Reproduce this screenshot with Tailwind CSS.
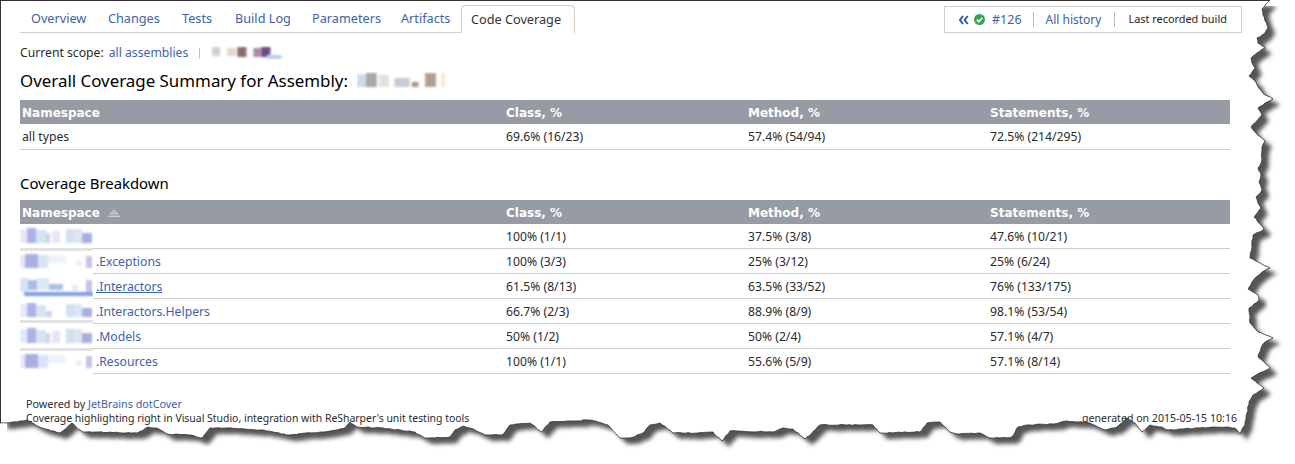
<!DOCTYPE html>
<html>
<head>
<meta charset="UTF-8">
<title>Code Coverage</title>
<script src="https://cdn.jsdelivr.net/npm/@tailwindcss/browser@4"></script>
</head>
<body class="bg-white">
<div class="relative w-[1295px] h-[464px] overflow-hidden bg-white text-[#2a2a2a] font-['Noto_Sans','Liberation_Sans',sans-serif] text-[12.2px]">

  <!-- mosaic patches -->
  <svg width="0" height="0" class="absolute">
    <defs>
      <filter id="soft"><feGaussianBlur stdDeviation="1"/></filter>
      <symbol id="mosA" viewBox="0 0 73 27">
        <rect y="2" width="73" height="25" fill="#fff"/>
        <g filter="url(#soft)">
          <rect x="0" y="5" width="8" height="14" fill="#e3ebf8"/><rect x="7" y="4" width="9" height="15" fill="#b0b0e6"/><rect x="16" y="6" width="10" height="13" fill="#d5e3f0"/><rect x="26" y="9" width="4" height="10" fill="#c9d6ec"/>
          <rect x="32" y="7" width="8" height="12" fill="#e8e4f6"/><rect x="46" y="5" width="8" height="14" fill="#d4dff0"/><rect x="54" y="5" width="8" height="14" fill="#dce6f4"/><rect x="62" y="9" width="10" height="10" fill="#a8aedc"/>
        </g>
        <rect x="0" y="24" width="73" height="3" fill="#e2e2e2"/>
      </symbol>
      <symbol id="mosD" viewBox="0 0 73 27">
        <rect y="2" width="73" height="25" fill="#fff"/>
        <g filter="url(#soft)">
          <rect x="0" y="5" width="8" height="13" fill="#e3ebf8"/><rect x="7" y="4" width="9" height="14" fill="#b0b0e6"/><rect x="16" y="6" width="10" height="12" fill="#d5e3f0"/><rect x="26" y="12" width="6" height="6" fill="#c9d6ec"/>
          <rect x="46" y="5" width="8" height="13" fill="#d4dff0"/><rect x="54" y="5" width="8" height="13" fill="#dce6f4"/><rect x="62" y="9" width="10" height="9" fill="#a8aedc"/>
        </g>
        <rect x="0" y="21" width="73" height="3" fill="#e2e2e2"/>
      </symbol>
      <symbol id="mosB" viewBox="0 0 73 27">
        <rect y="2" width="73" height="25" fill="#fff"/>
        <g filter="url(#soft)">
          <rect x="0" y="6" width="7" height="13" fill="#e8e8f6"/><rect x="5" y="5" width="13" height="14" fill="#aaaee2"/><rect x="18" y="6" width="10" height="13" fill="#dce2f6"/><rect x="28" y="6" width="18" height="8" fill="#eef2fb"/>
          <rect x="56" y="11" width="6" height="6" fill="#ecf1f8"/><rect x="66" y="7" width="6" height="12" fill="#c8c0e8"/>
        </g>
      </symbol>
      <symbol id="mosC" viewBox="0 0 73 27">
        <rect y="2" width="73" height="25" fill="#fff"/>
        <g filter="url(#soft)">
          <rect x="0" y="4" width="9" height="14" fill="#d8e2f4"/><rect x="8" y="6" width="9" height="10" fill="#a8bce6"/><rect x="17" y="4" width="12" height="12" fill="#dfe8f6"/><rect x="29" y="10" width="14" height="6" fill="#aac0e6"/>
          <rect x="52" y="11" width="6" height="6" fill="#e2eaf6"/><rect x="66" y="6" width="6" height="12" fill="#c8c0e8"/>
          <rect x="4" y="18" width="69" height="4" fill="#7f9fdc"/>
        </g>
      </symbol>
    </defs>
  </svg>

  <div class="border-t border-l border-[#333] h-full pl-[19px] pr-[53px]">
    <!-- tabs -->
    <div class="flex justify-between pt-1 w-[1222px] h-[28px] box-content">
      <div class="flex items-end w-[555px] h-[28px] border-b border-[#d0d0d0] text-[12.7px] text-[#3d62a8] whitespace-nowrap">
        <a class="w-[77px] pl-[11px] h-[27px] leading-[27px]">Overview</a>
        <a class="w-[74px] pl-[11px] h-[27px] leading-[27px]">Changes</a>
        <a class="w-[53px] pl-[11px] h-[27px] leading-[27px]">Tests</a>
        <a class="w-[77px] pl-[11px] h-[27px] leading-[27px]">Build Log</a>
        <a class="w-[89px] pl-[11px] h-[27px] leading-[27px]">Parameters</a>
        <a class="w-[71px] pl-[11px] h-[27px] leading-[27px]">Artifacts</a>
        <a class="w-[114px] pl-[9px] h-[28px] leading-[27px] -mb-px bg-white border border-b-0 border-[#d0d0d0] rounded-t text-[#333]">Code Coverage</a>
      </div>
      <div class="flex items-center w-[298px] h-[27px] mt-px border border-[#d0d0d0] text-[#3d62a8] whitespace-nowrap">
        <svg class="ml-[13px]" width="11" height="10" viewBox="0 0 11 10"><path d="M5 1 2 5l3 4M9.7 1 6.7 5l3 4" fill="none" stroke="#2f5da8" stroke-width="2"/></svg>
        <svg class="ml-[5px]" width="11" height="11" viewBox="0 0 12 12"><circle cx="6" cy="6" r="6" fill="#2fa84f"/><path d="M3 6.2 5.2 8.4 9 4.2" fill="none" stroke="#fff" stroke-width="1.8"/></svg>
        <span class="ml-[7px] pt-px text-[12.5px]">#126</span>
        <span class="ml-[11px] w-px h-[15px] bg-[#bbb]"></span>
        <span class="ml-[12px] text-[12px]">All history</span>
        <span class="ml-[13px] w-px h-[15px] bg-[#bbb]"></span>
        <span class="ml-[13px] text-[10.9px] text-[#222]">Last recorded build</span>
      </div>
    </div>

    <!-- scope -->
    <div class="flex items-center h-[16px] mt-[12px]">
      <span>Current scope:</span>
      <a class="ml-[5px] text-[#3d62a8]">all assemblies</a>
      <span class="ml-[11px] w-px h-[11px] bg-[#b8c4dc]"></span>
      <svg class="ml-[11px]" width="72" height="14" viewBox="0 0 63 14" preserveAspectRatio="none"><g filter="url(#soft)"><rect x="1" y="1" width="7" height="9" fill="#cfcfd6"/><rect x="14" y="2" width="8" height="8" fill="#e8d8cc"/><rect x="23" y="1" width="8" height="10" fill="#8a6a70"/><rect x="37" y="2" width="7" height="9" fill="#a88ea8"/><rect x="44" y="1" width="8" height="10" fill="#6a4a80"/><rect x="49" y="9" width="13" height="4" fill="#b8d0e4"/></g></svg>
    </div>

    <!-- summary -->
    <div class="flex items-center h-[24px] mt-[8px] text-[16.9px] text-black whitespace-nowrap">
      <span>Overall Coverage Summary for Assembly:</span>
      <svg class="ml-[9px]" width="90" height="18" viewBox="0 0 82 18" preserveAspectRatio="none"><g filter="url(#soft)"><rect x="0" y="2" width="8" height="13" fill="#d0dbe8"/><rect x="8" y="1" width="10" height="14" fill="#a8a8ac"/><rect x="20" y="3" width="9" height="12" fill="#e4e0dc"/><rect x="34" y="6" width="14" height="9" fill="#c8ccd4"/><rect x="50" y="10" width="6" height="5" fill="#a89888"/><rect x="62" y="1" width="10" height="14" fill="#b0a090"/><rect x="77" y="1" width="3" height="14" fill="#f6e8d0"/></g></svg>
    </div>
    <table class="table-fixed w-[1210px] mt-[7px] border-collapse [&_td]:pt-[2px] [&_th]:pt-[2px]">
      <colgroup><col class="w-[484px]"><col class="w-[242px]"><col class="w-[242px]"><col class="w-[242px]"></colgroup>
      <tr class="h-[24px] bg-[#979ba3] text-white text-left font-['DejaVu_Sans',sans-serif] text-[12px]">
        <th class="pl-[2px] font-bold">Namespace</th><th class="pl-[2px] font-bold">Class, %</th><th class="pl-[2px] font-bold">Method, %</th><th class="pl-[2px] font-bold">Statements, %</th>
      </tr>
      <tr class="h-[25px] border-b border-[#ccc]">
        <td class="pl-[2px]">all types</td><td class="pl-[2px]">69.6% (16/23)</td><td class="pl-[2px]">57.4% (54/94)</td><td class="pl-[2px]">72.5% (214/295)</td>
      </tr>
    </table>

    <!-- breakdown -->
    <div class="flex items-center h-[20px] mt-[24px] text-[14.9px] text-black">Coverage Breakdown</div>
    <table class="table-fixed w-[1210px] mt-[6px] border-collapse [&_td]:pt-[2px] [&_th]:pt-[2px]">
      <colgroup><col class="w-[484px]"><col class="w-[242px]"><col class="w-[242px]"><col class="w-[242px]"></colgroup>
      <tr class="h-[24px] bg-[#979ba3] text-white text-left font-['DejaVu_Sans',sans-serif] text-[12px]">
        <th class="pl-[2px] font-bold">
          <span class="inline-flex items-center gap-[8px]">Namespace
            <svg width="12" height="8" viewBox="0 0 13 8"><path d="M6.5 0.5 11 5H2z" fill="#b4b7bd" stroke="#e8e8e8" stroke-width="0.6"/><path d="M0.5 7.5H12.5" stroke="#f0f0f0"/></svg>
          </span>
        </th>
        <th class="pl-[2px] font-bold">Class, %</th><th class="pl-[2px] font-bold">Method, %</th><th class="pl-[2px] font-bold">Statements, %</th>
      </tr>
      <tr class="h-[25px] border-b border-[#ccc]">
        <td class="relative"><svg class="absolute left-0 top-0" width="73" height="27"><use href="#mosA"/></svg></td>
        <td class="pl-[2px]">100% (1/1)</td><td class="pl-[2px]">37.5% (3/8)</td><td class="pl-[2px]">47.6% (10/21)</td>
      </tr>
      <tr class="h-[25px] border-b border-[#ccc]">
        <td class="relative pl-[76px] text-[#3d62a8]"><svg class="absolute left-0 top-0" width="73" height="27"><use href="#mosB"/></svg>.Exceptions</td>
        <td class="pl-[2px]">100% (3/3)</td><td class="pl-[2px]">25% (3/12)</td><td class="pl-[2px]">25% (6/24)</td>
      </tr>
      <tr class="h-[25px] border-b border-[#ccc]">
        <td class="relative pl-[76px] text-[#3d62a8]"><svg class="absolute left-0 top-0" width="73" height="27"><use href="#mosC"/></svg><span class="underline">.Interactors</span></td>
        <td class="pl-[2px]">61.5% (8/13)</td><td class="pl-[2px]">63.5% (33/52)</td><td class="pl-[2px]">76% (133/175)</td>
      </tr>
      <tr class="h-[25px] border-b border-[#ccc]">
        <td class="relative pl-[76px] text-[#3d62a8]"><svg class="absolute left-0 top-0" width="73" height="27"><use href="#mosD"/></svg>.Interactors.Helpers</td>
        <td class="pl-[2px]">66.7% (2/3)</td><td class="pl-[2px]">88.9% (8/9)</td><td class="pl-[2px]">98.1% (53/54)</td>
      </tr>
      <tr class="h-[25px] border-b border-[#ccc]">
        <td class="relative pl-[76px] text-[#3d62a8]"><svg class="absolute left-0 top-0" width="73" height="27"><use href="#mosA"/></svg>.Models</td>
        <td class="pl-[2px]">50% (1/2)</td><td class="pl-[2px]">50% (2/4)</td><td class="pl-[2px]">57.1% (4/7)</td>
      </tr>
      <tr class="h-[25px] border-b border-[#ccc]">
        <td class="relative pl-[76px] text-[#3d62a8]"><svg class="absolute left-0 top-0" width="73" height="27"><use href="#mosB"/></svg>.Resources</td>
        <td class="pl-[2px]">100% (1/1)</td><td class="pl-[2px]">55.6% (5/9)</td><td class="pl-[2px]">57.1% (8/14)</td>
      </tr>
    </table>

    <!-- footer -->
    <div class="w-[1211px] ml-[6px] mt-[22px] text-[10.8px]">
      <div class="leading-[15px]">Powered by <a class="text-[#3d62a8]">JetBrains dotCover</a></div>
      <div class="flex justify-between leading-[15px]">
        <span class="text-[10.45px]">Coverage highlighting right in Visual Studio, integration with ReSharper's unit testing tools</span>
        <span class="text-[10.6px]">generated on 2015-05-15 10:16</span>
      </div>
    </div>
  </div>

  <!-- torn page edge, lies over the content -->
  <svg class="absolute inset-0" width="1295" height="464" viewBox="0 0 1295 464">
    <defs>
      <clipPath id="outside"><path id="clipShape" clip-rule="evenodd"/></clipPath>
      <filter id="shadowBlur" filterUnits="userSpaceOnUse" x="0" y="0" width="1295" height="464"><feGaussianBlur stdDeviation="2"/></filter>
    </defs>
    <path id="outer" fill="#fff" fill-rule="evenodd"/>
    <g clip-path="url(#outside)">
      <path id="shadow" fill="#555" filter="url(#shadowBlur)" transform="translate(7 6)"/>
    </g>
    <path id="edge" fill="none" stroke="#333" stroke-width="0.8"/>
  </svg>
</div>

<script>
  // outline of the torn page, clockwise from the top right corner
  const pts = [[1270,0],[1262,9],[1263,15],[1268,28],[1265,33],[1257,38],[1258,43],[1265,48],[1257,53],[1251,58],[1252,63],[1255,68],[1249,76],[1254,80],[1258,87],[1265,95],[1273,99],[1265,103],[1258,108],[1262,115],[1251,127],[1255,132],[1265,141],[1262,147],[1262,160],[1258,168],[1261,175],[1259,182],[1262,190],[1256,197],[1258,203],[1261,208],[1254,217],[1261,225],[1264,229],
    [1253,235],[1252,247],[1250,258],[1260,263],[1270,268],[1262,272],[1252,282],[1248,289],[1258,295],[1259,300],[1249,308],[1250,323],[1258,332],[1273,338],[1265,342],[1261,348],[1258,357],[1270,368],[1262,372],[1251,378],[1257,383],[1264,388],[1253,395],[1249,402],[1247,413],[1245,425],[1240,434],[1235,428],
    [1227,427],[1200,428],[1168,430],[1162,427],[1150,425],[1142,432],[1135,423],[1127,418],[1117,427],[1105,430],[1098,427],[1090,423],[1067,421],[1053,424],[1027,425],[1018,427],[1012,437],[1000,438],[990,438],[980,433],[957,434],[950,432],[940,422],[927,423],[920,432],[880,433],[873,425],[820,425],[812,433],[805,439],[793,429],[783,428],[773,432],[730,431],[722,441],[713,432],[698,433],[673,433],[660,423],
    [650,425],[643,433],[630,438],[620,438],[608,425],[590,420],[550,422],[542,432],[530,423],[510,425],[502,435],[485,435],[475,430],[463,426],[455,430],[450,437],[425,438],[415,432],[383,428],[357,427],[350,422],[345,428],[330,431],[290,435],[260,430],[227,428],[210,428],[202,438],[190,435],[167,434],[157,428],[148,427],[137,433],[83,432],[72,423],[60,433],[42,428],[27,420],[17,422],[7,423],[0,423]];

  // roughen the line a little, the seed is fixed so every render is the same
  let seed = 7;
  const rnd = () => { seed = (seed * 16807) % 2147483647; return seed / 2147483647 - 0.5; };
  let d = 'M0 0L1270 0';
  for (let i = 1; i < pts.length; i++) {
    const [x0, y0] = pts[i - 1], [x1, y1] = pts[i];
    const n = Math.max(1, Math.round(Math.hypot(x1 - x0, y1 - y0) / 3));
    for (let j = 1; j <= n; j++) {
      const k = j / n, end = j === n ? 0 : 1;
      d += 'L' + (x0 + (x1 - x0) * k + rnd() * end).toFixed(1) + ' ' + (y0 + (y1 - y0) * k + rnd() * end).toFixed(1);
    }
  }
  d += 'Z';
  const out = 'M0 0H1295V464H0Z' + d;
  document.getElementById('outer').setAttribute('d', out);
  document.getElementById('clipShape').setAttribute('d', out);
  document.getElementById('shadow').setAttribute('d', d);
  document.getElementById('edge').setAttribute('d', d.replace(/^M0 0L/, 'M').replace(/Z$/, ''));
</script>
</body>
</html>
